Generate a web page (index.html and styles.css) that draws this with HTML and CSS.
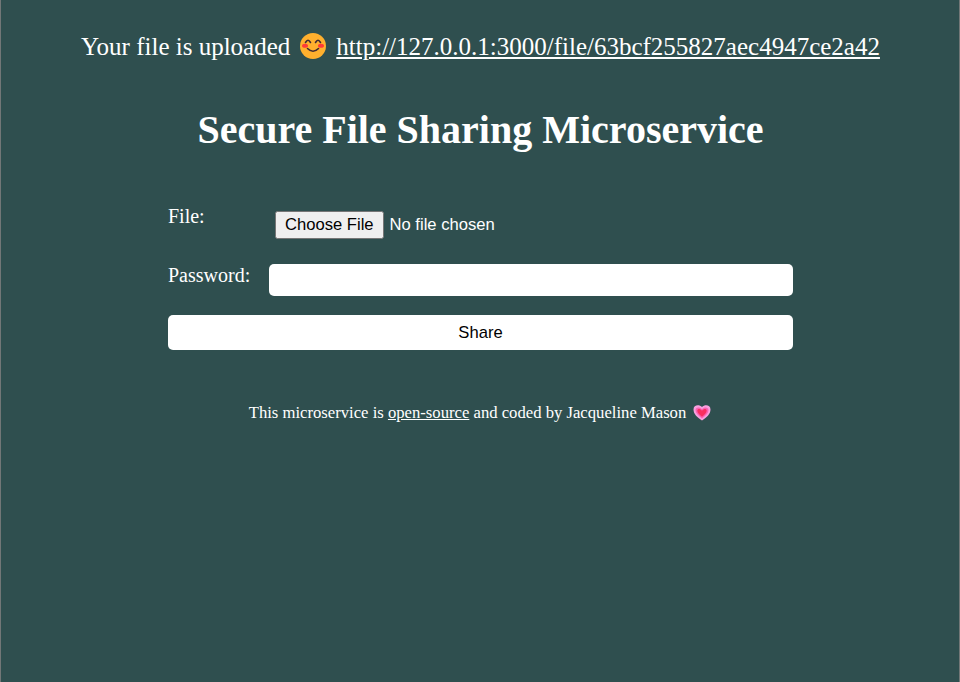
FILE: index.html
```html
<!DOCTYPE html>
<html lang="en">
<head>
<meta charset="utf-8">
<title>Secure File Sharing Microservice</title>
<link rel="stylesheet" href="styles.css">
</head>
<body>
<p class="notice"><span>Your file is uploaded</span>
<svg class="smile" viewBox="0 0 28 28" aria-hidden="true"><circle cx="14" cy="14" r="13" fill="#ffb02e"/><ellipse cx="6" cy="13.800" rx="3" ry="2" fill="#ff3a38"/><ellipse cx="22" cy="13.800" rx="3" ry="2" fill="#ff3a38"/><path d="M6.500 10.500q2.500-4.500 5 0M16.500 10.500q2.500-4.500 5 0M8.500 16.500q5.500 5.500 11 0" fill="none" stroke="#402a32" stroke-width="1.600" stroke-linecap="round"/></svg>
<a href="#">http://127.0.0.1:3000/file/63bcf255827aec4947ce2a42</a></p>
<h1>Secure File Sharing Microservice</h1>
<form class="form">
<div class="row file-row"><label for="file">File:</label><input type="file" id="file"></div>
<div class="row password-row"><label for="password">Password:</label><input class="password" type="password" id="password"></div>
<button class="share" type="button">Share</button>
</form>
<footer><span>This microservice is <a href="#">open-source</a> and coded by Jacqueline Mason</span>
<svg class="heart" viewBox="0 0 18 18" aria-hidden="true"><path d="M9 16.500C4 13 .5 10 .5 5.500 .5 1 6 .2 9 3 12 .2 17.500 1 17.500 5.500 17.500 10 14 13 9 16.500Z" fill="#f9a0df"/><path d="M9 14.500C5 11.500 2.500 9 2.500 6 2.500 3 6.500 2.500 9 5.200 11.500 2.500 15.500 3 15.500 6 15.500 9 13 11.500 9 14.500Z" fill="#fb62b4"/><path d="M9 12.800C6.500 10.800 4.300 8.800 4.300 6.700 4.300 4.500 7.200 4.500 9 6.700 10.800 4.500 13.700 4.500 13.700 6.700 13.700 8.800 11.500 10.800 9 12.800Z" fill="#f92f60"/></svg></footer>
</body>
</html>
```
FILE: styles.css
```css
* { box-sizing: border-box; }
body {
  margin: 0;
  min-height: 682px;
  padding: 32px 0 0 1px;
  background: #2f4f4f;
  border: solid #727777;
  border-width: 0 1px;
  color: #fff;
  font-family: "Liberation Serif", serif;
}
a { color: inherit; }
.notice {
  display: flex;
  justify-content: center;
  margin: 0;
  font-size: 25px;
  line-height: 29px;
}
.smile { width: 28px; height: 28px; margin: 0 9px; }
h1 {
  margin: 45px 0 0;
  font-size: 40px;
  line-height: 48px;
  text-align: center;
}
.form { width: 625px; margin: 52px auto 0; }
.row { display: flex; height: 58px; }
.row label { width: 101px; font-size: 20px; line-height: 20px; }
.file-row input {
  margin: 5px 0 0 6px;
  height: 28px;
  font: 16.6px "Liberation Sans", sans-serif;
}
.file-row input::file-selector-button {
  height: 28px;
  margin-right: 6px;
  padding: 0 8px 1px;
  font: inherit;
}
.password-row { height: 51px; }
.password-row label { padding-top: 1px; }
.password {
  flex: 1;
  height: 32px;
  border: 0;
  border-radius: 5px;
}
.share {
  display: block;
  width: 100%;
  height: 35px;
  border: 0;
  border-radius: 5px;
  background: #fff;
  color: #000;
  font: 16.6px "Liberation Sans", sans-serif;
}
footer {
  display: flex;
  justify-content: center;
  margin-top: 54px;
  padding-right: 1px;
  font-size: 16.67px;
  line-height: 18px;
}
.heart { width: 18px; height: 18px; margin-left: 7px; }
```
